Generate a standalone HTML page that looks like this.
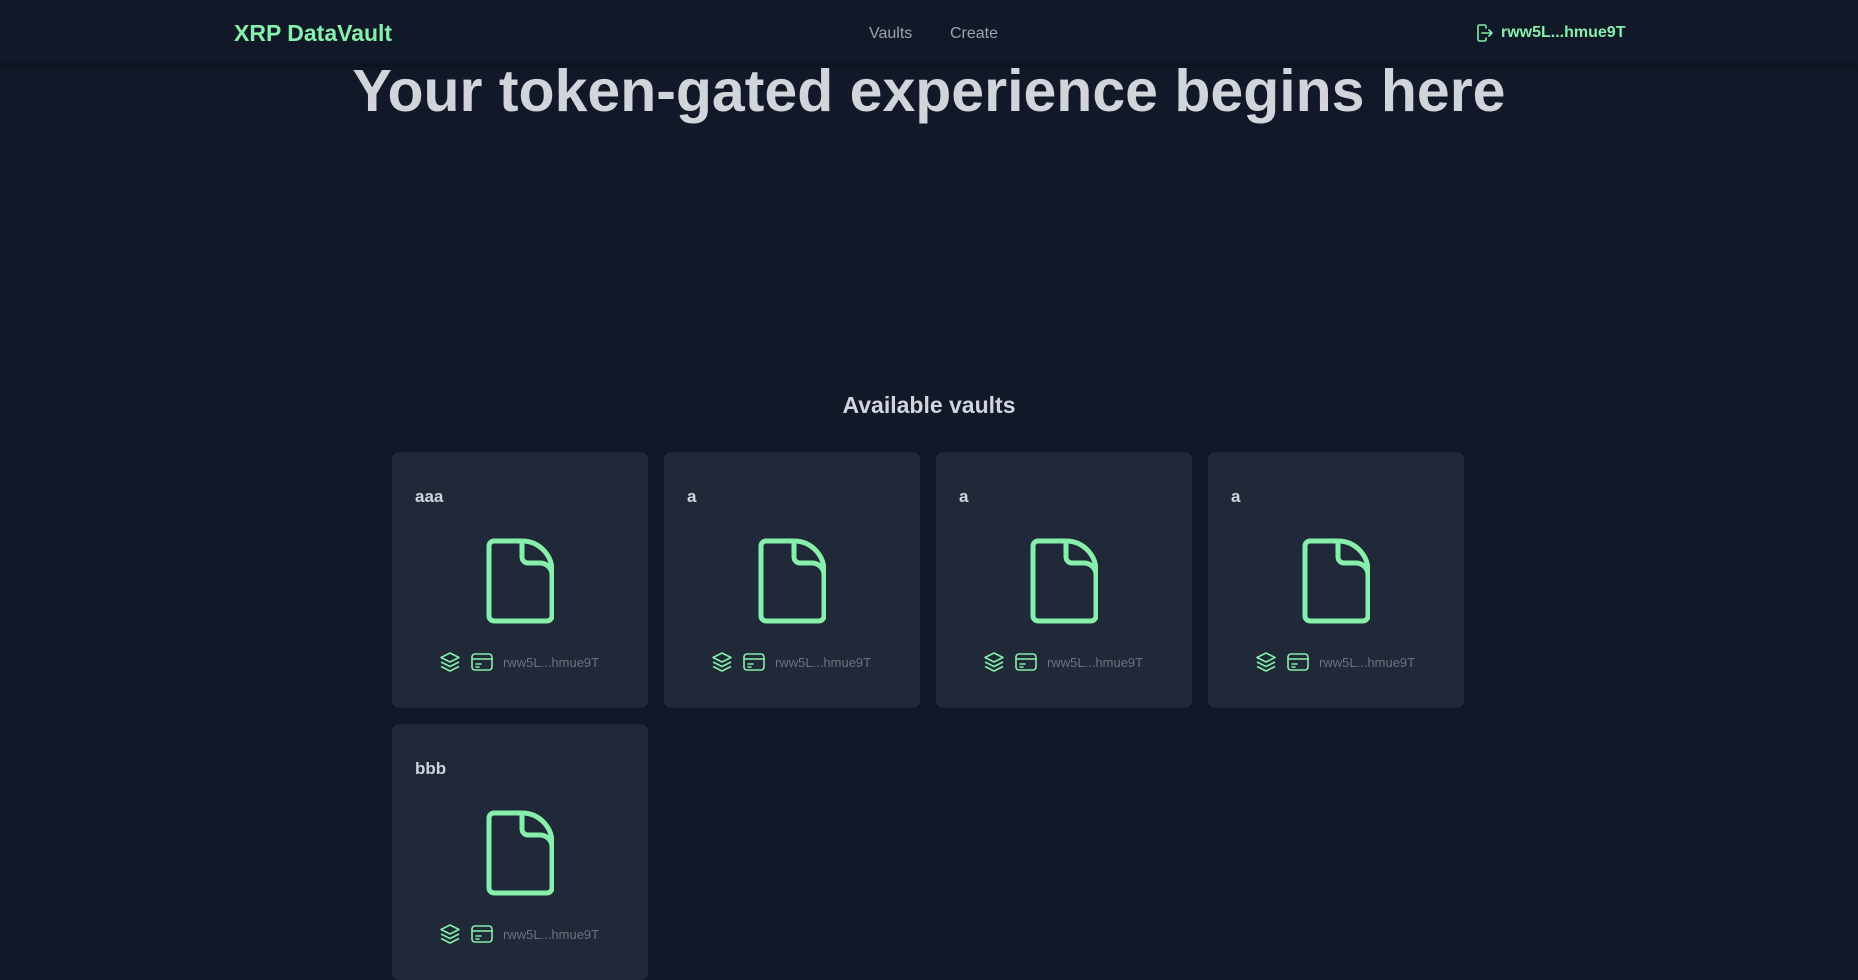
<!DOCTYPE html>
<html><head><meta charset="utf-8"><style>
*{margin:0;padding:0;box-sizing:border-box}
body{width:1858px;height:963px;overflow:hidden;background:#111827;font-family:"Liberation Sans",sans-serif;color:#d1d5db;position:relative}
nav{position:absolute;left:0;top:0;width:1858px;height:63px;background:#111827;box-shadow:0 2px 6px rgba(0,0,0,.35)}
.logo{position:absolute;left:234px;top:20px;font-size:23px;font-weight:bold;color:#86efac}
.link{position:absolute;top:25px;font-size:16px;color:#9ca3af}
.acct{position:absolute;left:1477px;top:24px;font-size:16px;font-weight:bold;color:#86efac;display:flex;align-items:center;gap:8px}
h1{position:absolute;left:0;width:1858px;text-align:center;top:57px;font-size:59px;font-weight:bold;color:#d1d5db}
h2{position:absolute;left:0;width:1858px;text-align:center;top:392px;font-size:23px;font-weight:bold;color:#d1d5db}
.card{position:absolute;width:256px;height:256px;background:#1f2937;border-radius:7px}
.card .t{position:absolute;left:23px;top:35px;font-size:17px;font-weight:bold;color:#d1d5db}
.card .doc{position:absolute;left:94px;top:86px}
.card .f{position:absolute;left:47px;top:199px;display:flex;align-items:center;gap:10px;font-size:13px;color:#6b7280}
</style></head><body>
<nav>
<div class="logo">XRP DataVault</div>
<div class="link" style="left:869px">Vaults</div>
<div class="link" style="left:950px">Create</div>
<div class="acct"><svg width="16" height="18" viewBox="0 0 16 18" fill="none" stroke="#86efac" stroke-width="1.6" stroke-linecap="round" stroke-linejoin="round"><path d="M9 4V2.5A1.5 1.5 0 0 0 7.5 1h-5A1.5 1.5 0 0 0 1 2.5v13A1.5 1.5 0 0 0 2.5 17h5A1.5 1.5 0 0 0 9 15.5V14"/><path d="M5 9h10M12 6l3 3-3 3"/></svg>rww5L...hmue9T</div>
</nav>
<h1>Your token-gated experience begins here</h1>
<h2>Available vaults</h2>
<div id="c"></div>
<script>
const cards=[["aaa",392,452],["a",664,452],["a",936,452],["a",1208,452],["bbb",392,724]];
const doc='<svg width="68" height="86" viewBox="0 0 68 86" fill="none" stroke="#86efac" stroke-width="5" stroke-linejoin="round"><path d="M9 3h27a30 30 0 0 1 30 30v45a5 5 0 0 1-5 5H8a5 5 0 0 1-5-5V8a5 5 0 0 1 5-5z"/><path d="M36 3v16a6 6 0 0 0 6 6h12a12 12 0 0 1 12 12"/></svg>';
const lay='<svg width="22" height="22" viewBox="0 0 22 22" fill="none" stroke="#86efac" stroke-width="1.6" stroke-linejoin="round"><path d="M11 2l9 4.5-9 4.5-9-4.5z"/><path d="M2 11l9 4.5 9-4.5"/><path d="M2 15.5l9 4.5 9-4.5"/></svg>';
const cc='<svg width="22" height="18" viewBox="0 0 22 18" fill="none" stroke="#86efac" stroke-width="1.6" stroke-linecap="round"><rect x="1" y="1" width="20" height="16" rx="3"/><path d="M1 6h20M5 11h5M5 14h3"/></svg>';
let h='';
for(const[t,x,y]of cards)h+=`<div class="card" style="left:${x}px;top:${y}px"><div class="t">${t}</div><div class="doc">${doc}</div><div class="f">${lay}${cc}<span>rww5L...hmue9T</span></div></div>`;
document.getElementById('c').innerHTML=h;
</script>
</body></html>
